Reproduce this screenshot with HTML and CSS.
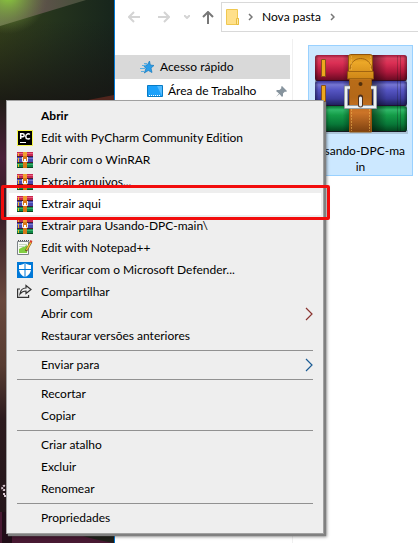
FILE: index.html
```html
<!DOCTYPE html>
<html lang="pt-BR">
<head>
<meta charset="utf-8">
<title>Nova pasta</title>
<link rel="stylesheet" href="styles.css">
</head>
<body>
<svg class="defs" aria-hidden="true">
  <defs>
    <linearGradient id="red" x2="0" y2="1"><stop offset="0" stop-color="#9c1a3c"/><stop offset=".12" stop-color="#d8405f"/><stop offset=".3" stop-color="#dc3055"/><stop offset=".65" stop-color="#b0183c"/><stop offset="1" stop-color="#620a20"/></linearGradient>
    <linearGradient id="blue" x2="0" y2="1"><stop offset="0" stop-color="#38389a"/><stop offset=".15" stop-color="#7676d2"/><stop offset=".35" stop-color="#5656c4"/><stop offset=".7" stop-color="#3c3c9c"/><stop offset="1" stop-color="#1c1c54"/></linearGradient>
    <linearGradient id="green" x2="0" y2="1"><stop offset="0" stop-color="#087030"/><stop offset=".15" stop-color="#30b868"/><stop offset=".35" stop-color="#149c48"/><stop offset=".7" stop-color="#087838"/><stop offset="1" stop-color="#02401c"/></linearGradient>
    <linearGradient id="strap" x2="0" y2="1"><stop offset="0" stop-color="#c88414"/><stop offset=".1" stop-color="#eca828"/><stop offset=".3" stop-color="#d08818"/><stop offset=".33" stop-color="#b86c18"/><stop offset=".55" stop-color="#b46818"/><stop offset=".75" stop-color="#cc7428"/><stop offset="1" stop-color="#7c4010"/></linearGradient>
    <linearGradient id="ends"><stop offset="0" stop-color="#000" stop-opacity=".4"/><stop offset=".04" stop-color="#000" stop-opacity="0"/><stop offset=".3" stop-color="#000" stop-opacity="0"/><stop offset=".38" stop-color="#000" stop-opacity=".3"/><stop offset=".62" stop-color="#000" stop-opacity=".5"/><stop offset=".78" stop-color="#000" stop-opacity="0"/><stop offset=".96" stop-color="#000" stop-opacity="0"/><stop offset="1" stop-color="#000" stop-opacity=".4"/></linearGradient>
    <symbol id="rar" viewBox="0 0 16 16">
      <path fill="#c82850" d="M0 0h16v5H0z"/><path fill="#e86080" d="M0 1h16v1H0z"/>
      <path fill="#4848b0" d="M0 5h16v6H0z"/><path fill="#7878cc" d="M0 6h16v1H0z"/>
      <path fill="#108848" d="M0 11h16v4H0z"/><path fill="#38b068" d="M0 12h16v1H0z"/>
      <path fill="#481830" d="M0 4h16v1H0zM0 10h16v1H0z"/><path fill="#084820" d="M0 15h16v1H0z"/>
      <path fill="#f0b820" d="M1 1h1v3H1zM1 6h1v4H1zM1 12h1v3H1z"/>
      <path fill="#d87818" d="M6 0h4v16H6z"/><path fill="#f0a030" d="M6 0h4v4H6z"/>
      <path fill="none" stroke="#f0e8e8" d="M5.500 5v4.500h5V5"/><path fill="#fff" d="M7 7h2v3H7z"/>
    </symbol>
  </defs>
</svg>
<div class="desktop">
  <svg class="wallpaper" viewBox="0 0 114 543" preserveAspectRatio="none" aria-hidden="true">
    <defs>
      <linearGradient id="panel" x1="0" y1="0" x2="1" y2="0"><stop offset="0" stop-color="#34401a"/><stop offset=".5" stop-color="#24331d"/><stop offset="1" stop-color="#17251c"/></linearGradient>
      <linearGradient id="dark" x2="0" y2="1"><stop offset=".2" stop-color="#181818" stop-opacity="0"/><stop offset="1" stop-color="#171513" stop-opacity=".85"/></linearGradient>
      <linearGradient id="beam" x1="0" y1="0" x2="1" y2="0"><stop offset="0" stop-color="#6d7450"/><stop offset=".5" stop-color="#5c5249"/><stop offset="1" stop-color="#45503a"/></linearGradient>
      <radialGradient id="glow" gradientUnits="userSpaceOnUse" cx="8" cy="-6" r="40"><stop offset="0" stop-color="#8fd43c"/><stop offset="1" stop-color="#6d8440" stop-opacity="0"/></radialGradient>
      <linearGradient id="side" x2="0" y2="1"><stop offset="0" stop-color="#201c16"/><stop offset=".13" stop-color="#4a2038"/><stop offset=".25" stop-color="#351c26"/><stop offset=".45" stop-color="#69483d"/><stop offset=".6" stop-color="#573c32"/><stop offset=".72" stop-color="#2c1b1e"/><stop offset="1" stop-color="#211419"/></linearGradient>
    </defs>
    <path fill="url(#panel)" d="M0 0h114v100H0z"/><path fill="url(#dark)" d="M0 0h114v100H0z"/>
    <path fill="url(#beam)" d="M0 0h86L0 26z"/><path fill="url(#glow)" d="M0 0h60v40H0z"/>
    <path fill="#50251d" d="M88 100l26-5v5z"/>
    <path fill="url(#side)" d="M0 100h8v443H0z"/>
    <path fill="#481932" d="M0 512h2v22h112v9H0z"/><path fill="#210d18" d="M2 512h10v31H2z"/><path fill="#20201a" d="M76 534h38v9c-13-2-25-5-38-9z"/>
    <path fill="none" stroke="#d8c8d0" stroke-width="2" stroke-dasharray="2 1" d="M5 486c-3-1-4 4-1 4h2M3 494h2v3"/>
  </svg>
  <main class="window">
    <header class="toolbar">
      <button class="nav dim" aria-label="Voltar"><svg width="12" height="12" viewBox="0 0 12 12"><path d="M6 1L1 6l5 5M1 6h11"/></svg></button>
      <button class="nav dim" aria-label="Avançar"><svg width="12" height="12" viewBox="0 0 12 12"><path d="M6 1l5 5-5 5M11 6H0"/></svg></button>
      <button class="nav small dim" aria-label="Locais recentes"><svg width="6" height="4" viewBox="0 0 6 4"><path d="M0 0l3 3 3-3"/></svg></button>
      <button class="nav up" aria-label="Acima"><svg width="12" height="13" viewBox="0 0 12 13"><path d="M1 6l5-5 5 5M6 1v12"/></svg></button>
      <nav class="address">
        <svg width="13" height="17" viewBox="0 0 13 17"><path fill="#ffe08a" stroke="#f0c850" d="M.5.500h11v9h1v6H.5z"/><path fill="#ffe9a6" stroke="#e8bd40" d="M10.500 9.500h2v6h-2z"/></svg>
        <svg class="crumb" width="5" height="8" viewBox="0 0 5 8"><path d="M1 1l3 3-3 3"/></svg>
        <a href="#pasta">Nova pasta</a>
        <svg class="crumb" width="5" height="8" viewBox="0 0 5 8"><path d="M1 1l3 3-3 3"/></svg>
      </nav>
    </header>
    <div class="content">
      <aside class="sidebar">
        <a class="place current" href="#rapido"><svg width="16" height="16" viewBox="0 0 16 16"><path fill="#2b9de8" stroke="#1479bd" stroke-width=".7" d="M9.500 2l.8 4 3.700.5-3 2.500 1 4.500-3.700-2-4 2.500 1.700-4.500L3.500 6.500l4-.7z"/><path stroke="#5aaee0" d="M4 4.500h3M2 6.500h4M0 9.500h5M1 12.500h3"/></svg><span>Acesso rápido</span></a>
        <a class="place child" href="#area"><svg width="16" height="13" viewBox="0 0 16 13"><path fill="#1ba1fa" stroke="#087bc4" d="M.5.500h15v11H.5z"/><path fill="#52bbff" d="M10 1h5v10z"/><path stroke="#fff" stroke-dasharray="1 1" d="M2 10.500h12"/></svg><span>Área de Trabalho</span><svg class="pin" width="11" height="11" viewBox="0 0 11 11"><path fill="#87949e" d="M6 0l5 5-1 1-1-.5-2 2V10L6 11 3.500 8 0 11l3-3.500L0 5l1-1h2.500l2-2L5 1z"/></svg></a>
      </aside>
      <section class="files" id="pasta">
        <a class="file" href="#arquivo">
          <svg width="96" height="80" viewBox="0 0 96 80" aria-hidden="true">
            <path fill="#000" opacity=".15" d="M3 76h92v4H3z"/>
            <rect x="2" y="1" width="92" height="26" rx="3" fill="url(#red)"/><rect x="2" y="27" width="92" height="25" rx="3" fill="url(#blue)"/><rect x="2" y="52" width="92" height="26" rx="3" fill="url(#green)"/>
            <rect x="2" y="1" width="92" height="77" rx="3" fill="url(#ends)"/>
            <path fill="none" stroke="#200c22" stroke-opacity=".7" d="M3 26.500h90M3 51.500h90M3 77.500h90"/>
            <path fill="none" stroke="#111" stroke-opacity=".25" d="M84.500 2v76M87.500 2v76"/>
            <path fill="#eda91e" stroke="#8a501c" d="M8.500 5.500h4v17h-4zM8.500 31.500h4v16h-4zM8.500 56.500h4v17h-4z"/>
            <path fill="url(#strap)" stroke="#92540d" d="M35.500 17V1.500l2-1h20l2 1V17l1 1v7h-2v53h-22V25h-2v-7z"/>
            <path fill="none" stroke="#a16410" d="M37 15c1-14 20-14 22 0M35 17.500h25M36 24.500h23"/>
            <path fill="none" stroke="#edb050" stroke-opacity=".6" stroke-dasharray="2 1" d="M38.500 2v14M57.500 2v14M38.500 55v22M56.500 55v22"/>
            <circle cx="47.500" cy="30" r="2" fill="#51300d"/>
            <path fill="none" stroke="#78848a" stroke-width="4" d="M37 33.500h-4V53h29V33.500h-4"/><path fill="none" stroke="#eef0f2" stroke-width="2.500" d="M37 33.500h-4V53h29V33.500h-4"/>
            <path stroke="#4e301c" stroke-width="5" stroke-linecap="round" d="M47.500 43v8"/><path stroke="#e8ebee" stroke-width="3" stroke-linecap="round" d="M47.500 44v7"/>
          </svg>
          <span>Usando-DPC-ma<br>in</span>
        </a>
      </section>
    </div>
  </main>
  <div class="menu" role="menu">
    <button role="menuitem" class="default"><i></i>Abrir</button>
    <button role="menuitem"><svg class="icon" viewBox="0 0 16 16"><path fill="#000" stroke="#f8f84a" d="M.5.500h15v15H.5z"/><path stroke="#fff" d="M3 12.500h6"/><path fill="none" stroke="#fff" stroke-width="1.500" d="M3.700 9V3.700h2c2 0 2 3 0 3h-2M12.800 4.500c-1-1.200-4-1-4 1.900s3 3 4 1.900"/></svg>Edit with PyCharm Community Edition</button>
    <button role="menuitem"><svg class="icon"><use href="#rar"/></svg>Abrir com o WinRAR</button>
    <button role="menuitem"><svg class="icon"><use href="#rar"/></svg>Extrair arquivos...</button>
    <button role="menuitem" class="active"><svg class="icon"><use href="#rar"/></svg>Extrair aqui</button>
    <button role="menuitem"><svg class="icon"><use href="#rar"/></svg>Extrair para Usando-DPC-main\</button>
    <button role="menuitem"><svg class="icon" viewBox="0 0 16 16"><path fill="#f8faf4" stroke="#7c8288" d="M.5 1.500h11v13H.5z"/><path fill="#81ce42" d="M2 9l8-4v8H2z"/><path stroke="#c4d6c0" d="M2 4.500h8M2 6.500h6"/><path stroke="#555" stroke-dasharray="1 1" d="M1 .5h11"/><path stroke="#70501c" stroke-width="2.500" d="M14 2L9 11"/><path stroke="#f6c43c" stroke-width="1.500" d="M14 2L9.500 10"/><path stroke="#d83d30" stroke-width="2" d="M13 1l2 1"/></svg>Edit with Notepad++</button>
    <button role="menuitem"><svg class="icon" viewBox="0 0 16 16"><path fill="#0078d7" d="M0 0h16v16H0z"/><path fill="#fff" d="M8 1c2 1.500 4 2 6 2v4c0 4-3 7-6 8-3-1-6-4-6-8V3c2 0 4-.5 6-2z"/><path stroke="#0078d7" d="M8 1v14M2 7.500h12"/></svg>Verificar com o Microsoft Defender...</button>
    <button role="menuitem"><svg class="icon" viewBox="0 0 16 16"><path fill="none" stroke="#333" stroke-width="1.200" d="M3 5H.6v8.400h11V11M9 1.500l5 4-5 4V7C6 7 4.500 8 3 10c.5-4 2.500-6 6-6z"/></svg>Compartilhar</button>
    <button role="menuitem"><i></i>Abrir com<svg class="more warm" viewBox="0 0 8 14"><path d="M1 1l6 6-6 6"/></svg></button>
    <button role="menuitem"><i></i>Restaurar versões anteriores</button>
    <hr>
    <button role="menuitem"><i></i>Enviar para<svg class="more" viewBox="0 0 8 14"><path d="M1 1l6 6-6 6"/></svg></button>
    <hr>
    <button role="menuitem"><i></i>Recortar</button>
    <button role="menuitem"><i></i>Copiar</button>
    <hr>
    <button role="menuitem"><i></i>Criar atalho</button>
    <button role="menuitem"><i></i>Excluir</button>
    <button role="menuitem"><i></i>Renomear</button>
    <hr>
    <button role="menuitem"><i></i>Propriedades</button>
  </div>
</div>
</body>
</html>
```
FILE: styles.css
```css
* { box-sizing: border-box; }
body { margin: 0; font: 12px/16px Lato, "Segoe UI", sans-serif; font-variant-ligatures: none; color: #000; }
a { color: inherit; text-decoration: none; }
button { font: inherit; font-variant-ligatures: none; color: inherit; background: none; border: 0; padding: 0; text-align: left; }
svg { flex: none; }
.defs { position: absolute; width: 0; height: 0; }

.desktop { position: relative; display: grid; grid-template-columns: 114px 1fr; min-height: 100vh; overflow: hidden; }
.wallpaper { width: 100%; height: 100%; }
.window { display: flex; flex-direction: column; background: #fff; border-left: 1px solid #0078d7; min-width: 0; }

.toolbar { display: flex; align-items: center; height: 34px; padding-left: 13px; }
.nav { display: grid; place-items: center start; width: 30px; height: 30px; }
.nav.small { width: 18px; margin-left: -4px; }
.nav.up { width: 19px; }
.nav path { fill: none; stroke: #777; stroke-width: 2; }
.nav.dim path { stroke: #d4d4d4; }
.address { display: flex; align-items: center; flex: 1; height: 30px; padding-left: 4px; border: 1px solid #d9d9d9; border-right: 0; gap: 9px; }
.crumb path { fill: none; stroke: #777; stroke-width: 1.5; }

.content { display: flex; flex: 1; padding-top: 5px; }
.sidebar { width: 178px; padding: 16px 2px 0 0; border-right: 1px solid #f0f0f0; }
.place { display: flex; align-items: center; gap: 4px; height: 24px; padding-left: 25px; }
.place.current { background: #d9d9d9; }
.place.child { padding: 0 3px 0 32px; gap: 5px; }
.pin { margin-left: auto; }
.files { padding: 6px 0 0 15px; }
.file { display: flex; flex-direction: column; align-items: center; width: 105px; height: 131px; padding-top: 8px; background: #cce8ff; border: 1px solid #99d1ff; text-align: center; }
.file span { margin-top: 9px; line-height: 16px; }

.menu { position: absolute; left: 6px; top: 100px; width: 318px; padding: 4px 2px; background: #eee; border: 1px solid #a0a0a0; box-shadow: 2px 2px 1px #808080, 3px 3px 3px rgba(0, 0, 0, .4); }
.menu button { position: relative; display: grid; grid-template-columns: 16px 1fr 8px; column-gap: 8px; align-items: center; width: 100%; height: 22px; padding: 0 8px; white-space: nowrap; }
.menu .default { font-weight: 700; }
.menu .active { background: #fff; }
.menu .active::after { content: ""; position: absolute; z-index: 1; inset: -8px -9px -5px -8px; border: 3px solid #f20d0d; border-radius: 2px; }
.menu hr { height: 1px; margin: 3px 8px; border: 0; background: #919191; }
.icon { width: 16px; height: 16px; }
.more { width: 8px; height: 14px; }
.more path { fill: none; stroke: #1c5c94; stroke-width: 1.2; }
.more.warm path { stroke: #8a3430; }
```
